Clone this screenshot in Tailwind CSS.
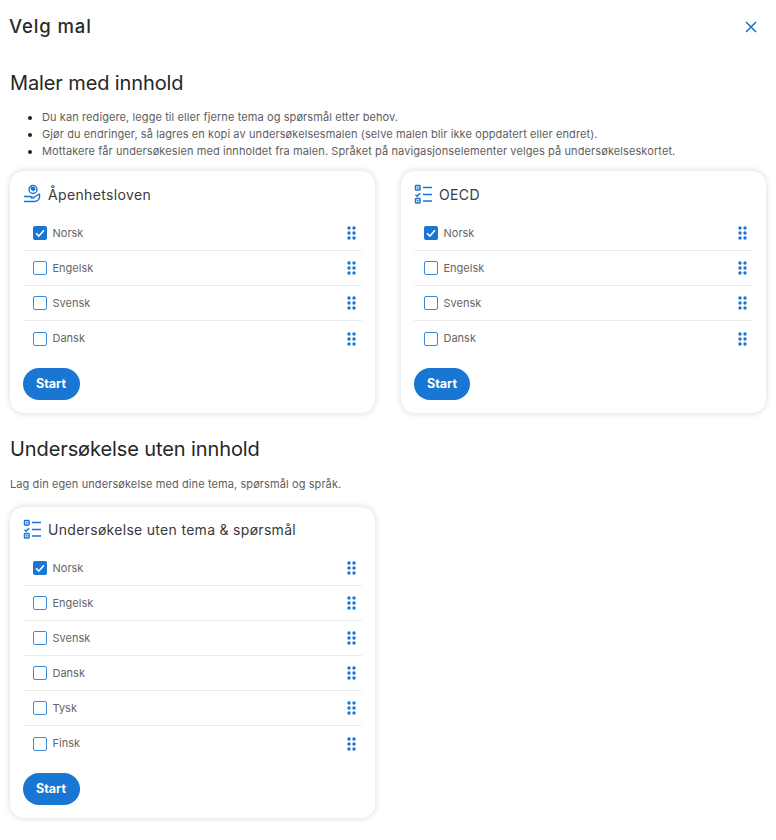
<!DOCTYPE html>
<html lang="no">
<head>
<meta charset="utf-8">
<title>Velg mal</title>
<script src="https://cdn.jsdelivr.net/npm/@tailwindcss/browser@4"></script>
</head>
<body class="bg-white font-['Inter',sans-serif] text-[#262626] overflow-hidden">
<div class="w-[776px] h-[840px] overflow-hidden">
  <!-- header -->
  <div class="h-[53px] pl-[9px] pr-[18px] flex items-center justify-between">
    <h1 class="text-[18.5px] font-medium tracking-[0.9px] text-[#2b2b2b]">Velg mal</h1>
    <svg width="14" height="14" viewBox="0 0 14 14" fill="none" stroke="#1976d2" stroke-width="1.6"><path d="M2 2l10 10M12 2L2 12"/></svg>
  </div>

  <div class="pl-[10px] pr-[10px]">
    <h2 class="mt-[16px] text-[20px] leading-[28px] tracking-[-0.12px] text-[#262626]">Maler med innhold</h2>
    <ul class="mt-[12px] list-disc pl-[32px] text-[11px] leading-[17px] tracking-[0.095px] text-[#5e5e5e] marker:text-[#222]">
      <li>Du kan redigere, legge til eller fjerne tema og spørsmål etter behov.</li>
      <li>Gjør du endringer, så lagres en kopi av undersøkelsesmalen (selve malen blir ikke oppdatert eller endret).</li>
      <li>Mottakere får undersøkeslen med innholdet fra malen. Språket på navigasjonselementer velges på undersøkelseskortet.</li>
    </ul>

    <div class="mt-[11px] grid grid-cols-[365px_365px] gap-x-[26px]">
      <!-- card 1 -->
      <div class="h-[242px] rounded-[14px] shadow-[0_0_6px_rgba(0,0,0,0.16)] px-[13px] pt-[12px]">
        <div class="flex items-center gap-[7px] h-[22px]">
          <svg width="18" height="20" viewBox="0 0 18 20" fill="none" stroke="#1976d2" stroke-width="1.4"><circle cx="10" cy="5.5" r="4"/><path d="M7.5 3h4l1.2 2.2-2.2 2-2.5-1.2z" fill="#1976d2" stroke="none"/><path d="M1 12.5h6.5c1.2 0 2.5 1.3 2.5 1.3H7.5M1 17.5h10.5c2.5 0 5-1.8 5-4.5V9.5"/><path d="M10 13.8l6.5-3.8"/></svg>
          <span class="text-[14px] tracking-[0.36px] text-[#3a3a3a]">Åpenhetsloven</span>
        </div>
        <div class="mt-[11px]">
          <div class="h-[35px] flex items-center justify-between border-b border-[#ebebeb] pl-[10px] pr-[6px]"><div class="flex items-center gap-[5.5px]"><span class="w-[14px] h-[14px] rounded-[2px] bg-[#1976d2] flex items-center justify-center"><svg width="12" height="12" viewBox="0 0 12 12" fill="none" stroke="#fff" stroke-width="1.6"><path d="M2 6.2l2.8 2.8L10 3.2"/></svg></span><span class="text-[11px] text-[#666]">Norsk</span></div><svg width="9" height="14" viewBox="0 0 9 14" fill="#1976d2"><circle cx="2" cy="2" r="1.7"/><circle cx="7" cy="2" r="1.7"/><circle cx="2" cy="7" r="1.7"/><circle cx="7" cy="7" r="1.7"/><circle cx="2" cy="12" r="1.7"/><circle cx="7" cy="12" r="1.7"/></svg></div>
          <div class="h-[35px] flex items-center justify-between border-b border-[#ebebeb] pl-[10px] pr-[6px]"><div class="flex items-center gap-[5.5px]"><span class="w-[14px] h-[14px] rounded-[2px] border-[1.5px] border-[#1976d2]/85"></span><span class="text-[11px] text-[#666]">Engelsk</span></div><svg width="9" height="14" viewBox="0 0 9 14" fill="#1976d2"><circle cx="2" cy="2" r="1.7"/><circle cx="7" cy="2" r="1.7"/><circle cx="2" cy="7" r="1.7"/><circle cx="7" cy="7" r="1.7"/><circle cx="2" cy="12" r="1.7"/><circle cx="7" cy="12" r="1.7"/></svg></div>
          <div class="h-[35px] flex items-center justify-between border-b border-[#ebebeb] pl-[10px] pr-[6px]"><div class="flex items-center gap-[5.5px]"><span class="w-[14px] h-[14px] rounded-[2px] border-[1.5px] border-[#1976d2]/85"></span><span class="text-[11px] text-[#666]">Svensk</span></div><svg width="9" height="14" viewBox="0 0 9 14" fill="#1976d2"><circle cx="2" cy="2" r="1.7"/><circle cx="7" cy="2" r="1.7"/><circle cx="2" cy="7" r="1.7"/><circle cx="7" cy="7" r="1.7"/><circle cx="2" cy="12" r="1.7"/><circle cx="7" cy="12" r="1.7"/></svg></div>
          <div class="h-[35px] flex items-center justify-between pl-[10px] pr-[6px]"><div class="flex items-center gap-[5.5px]"><span class="w-[14px] h-[14px] rounded-[2px] border-[1.5px] border-[#1976d2]/85"></span><span class="text-[11px] text-[#666]">Dansk</span></div><svg width="9" height="14" viewBox="0 0 9 14" fill="#1976d2"><circle cx="2" cy="2" r="1.7"/><circle cx="7" cy="2" r="1.7"/><circle cx="2" cy="7" r="1.7"/><circle cx="7" cy="7" r="1.7"/><circle cx="2" cy="12" r="1.7"/><circle cx="7" cy="12" r="1.7"/></svg></div>
        </div>
        <button class="mt-[12px] w-[57px] h-[32px] pr-[1px] rounded-full bg-[#1976d2] text-white text-[12.5px] font-bold">Start</button>
      </div>

      <!-- card 2 -->
      <div class="h-[242px] rounded-[14px] shadow-[0_0_6px_rgba(0,0,0,0.16)] px-[13px] pt-[12px]">
        <div class="flex items-center gap-[7px] h-[22px]">
          <svg width="18" height="20" viewBox="0 0 18 20" fill="none" stroke="#1976d2" stroke-width="1.5"><rect x="1.5" y="1.5" width="4.5" height="4.5" rx="0.6"/><path d="M1.5 10.8l1.6 1.4 3-3"/><rect x="1.5" y="14.5" width="4.5" height="4.5" rx="0.6"/><rect x="3" y="3" width="1.5" height="1.5" fill="#1976d2" stroke="none"/><rect x="3" y="16" width="1.5" height="1.5" fill="#1976d2" stroke="none"/><path d="M9 3.5h9M9 10.5h9M9 17h9" stroke-width="1.7"/></svg>
          <span class="text-[14px] tracking-[0.36px] text-[#3a3a3a]">OECD</span>
        </div>
        <div class="mt-[11px]">
          <div class="h-[35px] flex items-center justify-between border-b border-[#ebebeb] pl-[10px] pr-[6px]"><div class="flex items-center gap-[5.5px]"><span class="w-[14px] h-[14px] rounded-[2px] bg-[#1976d2] flex items-center justify-center"><svg width="12" height="12" viewBox="0 0 12 12" fill="none" stroke="#fff" stroke-width="1.6"><path d="M2 6.2l2.8 2.8L10 3.2"/></svg></span><span class="text-[11px] text-[#666]">Norsk</span></div><svg width="9" height="14" viewBox="0 0 9 14" fill="#1976d2"><circle cx="2" cy="2" r="1.7"/><circle cx="7" cy="2" r="1.7"/><circle cx="2" cy="7" r="1.7"/><circle cx="7" cy="7" r="1.7"/><circle cx="2" cy="12" r="1.7"/><circle cx="7" cy="12" r="1.7"/></svg></div>
          <div class="h-[35px] flex items-center justify-between border-b border-[#ebebeb] pl-[10px] pr-[6px]"><div class="flex items-center gap-[5.5px]"><span class="w-[14px] h-[14px] rounded-[2px] border-[1.5px] border-[#1976d2]/85"></span><span class="text-[11px] text-[#666]">Engelsk</span></div><svg width="9" height="14" viewBox="0 0 9 14" fill="#1976d2"><circle cx="2" cy="2" r="1.7"/><circle cx="7" cy="2" r="1.7"/><circle cx="2" cy="7" r="1.7"/><circle cx="7" cy="7" r="1.7"/><circle cx="2" cy="12" r="1.7"/><circle cx="7" cy="12" r="1.7"/></svg></div>
          <div class="h-[35px] flex items-center justify-between border-b border-[#ebebeb] pl-[10px] pr-[6px]"><div class="flex items-center gap-[5.5px]"><span class="w-[14px] h-[14px] rounded-[2px] border-[1.5px] border-[#1976d2]/85"></span><span class="text-[11px] text-[#666]">Svensk</span></div><svg width="9" height="14" viewBox="0 0 9 14" fill="#1976d2"><circle cx="2" cy="2" r="1.7"/><circle cx="7" cy="2" r="1.7"/><circle cx="2" cy="7" r="1.7"/><circle cx="7" cy="7" r="1.7"/><circle cx="2" cy="12" r="1.7"/><circle cx="7" cy="12" r="1.7"/></svg></div>
          <div class="h-[35px] flex items-center justify-between pl-[10px] pr-[6px]"><div class="flex items-center gap-[5.5px]"><span class="w-[14px] h-[14px] rounded-[2px] border-[1.5px] border-[#1976d2]/85"></span><span class="text-[11px] text-[#666]">Dansk</span></div><svg width="9" height="14" viewBox="0 0 9 14" fill="#1976d2"><circle cx="2" cy="2" r="1.7"/><circle cx="7" cy="2" r="1.7"/><circle cx="2" cy="7" r="1.7"/><circle cx="7" cy="7" r="1.7"/><circle cx="2" cy="12" r="1.7"/><circle cx="7" cy="12" r="1.7"/></svg></div>
        </div>
        <button class="mt-[12px] w-[56px] h-[32px] rounded-full bg-[#1976d2] text-white text-[12.5px] font-bold">Start</button>
      </div>
    </div>

    <h2 class="mt-[22px] text-[20px] leading-[28px] tracking-[-0.1px] text-[#262626]">Undersøkelse uten innhold</h2>
    <p class="mt-[13px] text-[11px] leading-[17px] tracking-[0.095px] text-[#5e5e5e]">Lag din egen undersøkelse med dine tema, spørsmål og språk.</p>

    <!-- card 3 -->
    <div class="mt-[14px] w-[365px] h-[311px] rounded-[14px] shadow-[0_0_6px_rgba(0,0,0,0.16)] px-[13px] pt-[11px]">
      <div class="flex items-center gap-[7px] h-[22px]">
        <svg width="18" height="20" viewBox="0 0 18 20" fill="none" stroke="#1976d2" stroke-width="1.5"><rect x="1.5" y="1.5" width="4.5" height="4.5" rx="0.6"/><path d="M1.5 10.8l1.6 1.4 3-3"/><rect x="1.5" y="14.5" width="4.5" height="4.5" rx="0.6"/><rect x="3" y="3" width="1.5" height="1.5" fill="#1976d2" stroke="none"/><rect x="3" y="16" width="1.5" height="1.5" fill="#1976d2" stroke="none"/><path d="M9 3.5h9M9 10.5h9M9 17h9" stroke-width="1.7"/></svg>
        <span class="text-[14px] tracking-[0.3px] text-[#3a3a3a]">Undersøkelse uten tema &amp; spørsmål</span>
      </div>
      <div class="mt-[11px]">
        <div class="h-[35px] flex items-center justify-between border-b border-[#ebebeb] pl-[10px] pr-[6px]"><div class="flex items-center gap-[5.5px]"><span class="w-[14px] h-[14px] rounded-[2px] bg-[#1976d2] flex items-center justify-center"><svg width="12" height="12" viewBox="0 0 12 12" fill="none" stroke="#fff" stroke-width="1.6"><path d="M2 6.2l2.8 2.8L10 3.2"/></svg></span><span class="text-[11px] text-[#666]">Norsk</span></div><svg width="9" height="14" viewBox="0 0 9 14" fill="#1976d2"><circle cx="2" cy="2" r="1.7"/><circle cx="7" cy="2" r="1.7"/><circle cx="2" cy="7" r="1.7"/><circle cx="7" cy="7" r="1.7"/><circle cx="2" cy="12" r="1.7"/><circle cx="7" cy="12" r="1.7"/></svg></div>
        <div class="h-[35px] flex items-center justify-between border-b border-[#ebebeb] pl-[10px] pr-[6px]"><div class="flex items-center gap-[5.5px]"><span class="w-[14px] h-[14px] rounded-[2px] border-[1.5px] border-[#1976d2]/85"></span><span class="text-[11px] text-[#666]">Engelsk</span></div><svg width="9" height="14" viewBox="0 0 9 14" fill="#1976d2"><circle cx="2" cy="2" r="1.7"/><circle cx="7" cy="2" r="1.7"/><circle cx="2" cy="7" r="1.7"/><circle cx="7" cy="7" r="1.7"/><circle cx="2" cy="12" r="1.7"/><circle cx="7" cy="12" r="1.7"/></svg></div>
        <div class="h-[35px] flex items-center justify-between border-b border-[#ebebeb] pl-[10px] pr-[6px]"><div class="flex items-center gap-[5.5px]"><span class="w-[14px] h-[14px] rounded-[2px] border-[1.5px] border-[#1976d2]/85"></span><span class="text-[11px] text-[#666]">Svensk</span></div><svg width="9" height="14" viewBox="0 0 9 14" fill="#1976d2"><circle cx="2" cy="2" r="1.7"/><circle cx="7" cy="2" r="1.7"/><circle cx="2" cy="7" r="1.7"/><circle cx="7" cy="7" r="1.7"/><circle cx="2" cy="12" r="1.7"/><circle cx="7" cy="12" r="1.7"/></svg></div>
        <div class="h-[35px] flex items-center justify-between border-b border-[#ebebeb] pl-[10px] pr-[6px]"><div class="flex items-center gap-[5.5px]"><span class="w-[14px] h-[14px] rounded-[2px] border-[1.5px] border-[#1976d2]/85"></span><span class="text-[11px] text-[#666]">Dansk</span></div><svg width="9" height="14" viewBox="0 0 9 14" fill="#1976d2"><circle cx="2" cy="2" r="1.7"/><circle cx="7" cy="2" r="1.7"/><circle cx="2" cy="7" r="1.7"/><circle cx="7" cy="7" r="1.7"/><circle cx="2" cy="12" r="1.7"/><circle cx="7" cy="12" r="1.7"/></svg></div>
        <div class="h-[35px] flex items-center justify-between border-b border-[#ebebeb] pl-[10px] pr-[6px]"><div class="flex items-center gap-[5.5px]"><span class="w-[14px] h-[14px] rounded-[2px] border-[1.5px] border-[#1976d2]/85"></span><span class="text-[11px] text-[#666]">Tysk</span></div><svg width="9" height="14" viewBox="0 0 9 14" fill="#1976d2"><circle cx="2" cy="2" r="1.7"/><circle cx="7" cy="2" r="1.7"/><circle cx="2" cy="7" r="1.7"/><circle cx="7" cy="7" r="1.7"/><circle cx="2" cy="12" r="1.7"/><circle cx="7" cy="12" r="1.7"/></svg></div>
        <div class="h-[35px] flex items-center justify-between pl-[10px] pr-[6px]"><div class="flex items-center gap-[5.5px]"><span class="w-[14px] h-[14px] rounded-[2px] border-[1.5px] border-[#1976d2]/85"></span><span class="text-[11px] text-[#666]">Finsk</span></div><svg width="9" height="14" viewBox="0 0 9 14" fill="#1976d2"><circle cx="2" cy="2" r="1.7"/><circle cx="7" cy="2" r="1.7"/><circle cx="2" cy="7" r="1.7"/><circle cx="7" cy="7" r="1.7"/><circle cx="2" cy="12" r="1.7"/><circle cx="7" cy="12" r="1.7"/></svg></div>
      </div>
      <button class="mt-[12px] w-[57px] h-[32px] pr-[1px] rounded-full bg-[#1976d2] text-white text-[12.5px] font-bold">Start</button>
    </div>
  </div>
</div>
</body>
</html>
